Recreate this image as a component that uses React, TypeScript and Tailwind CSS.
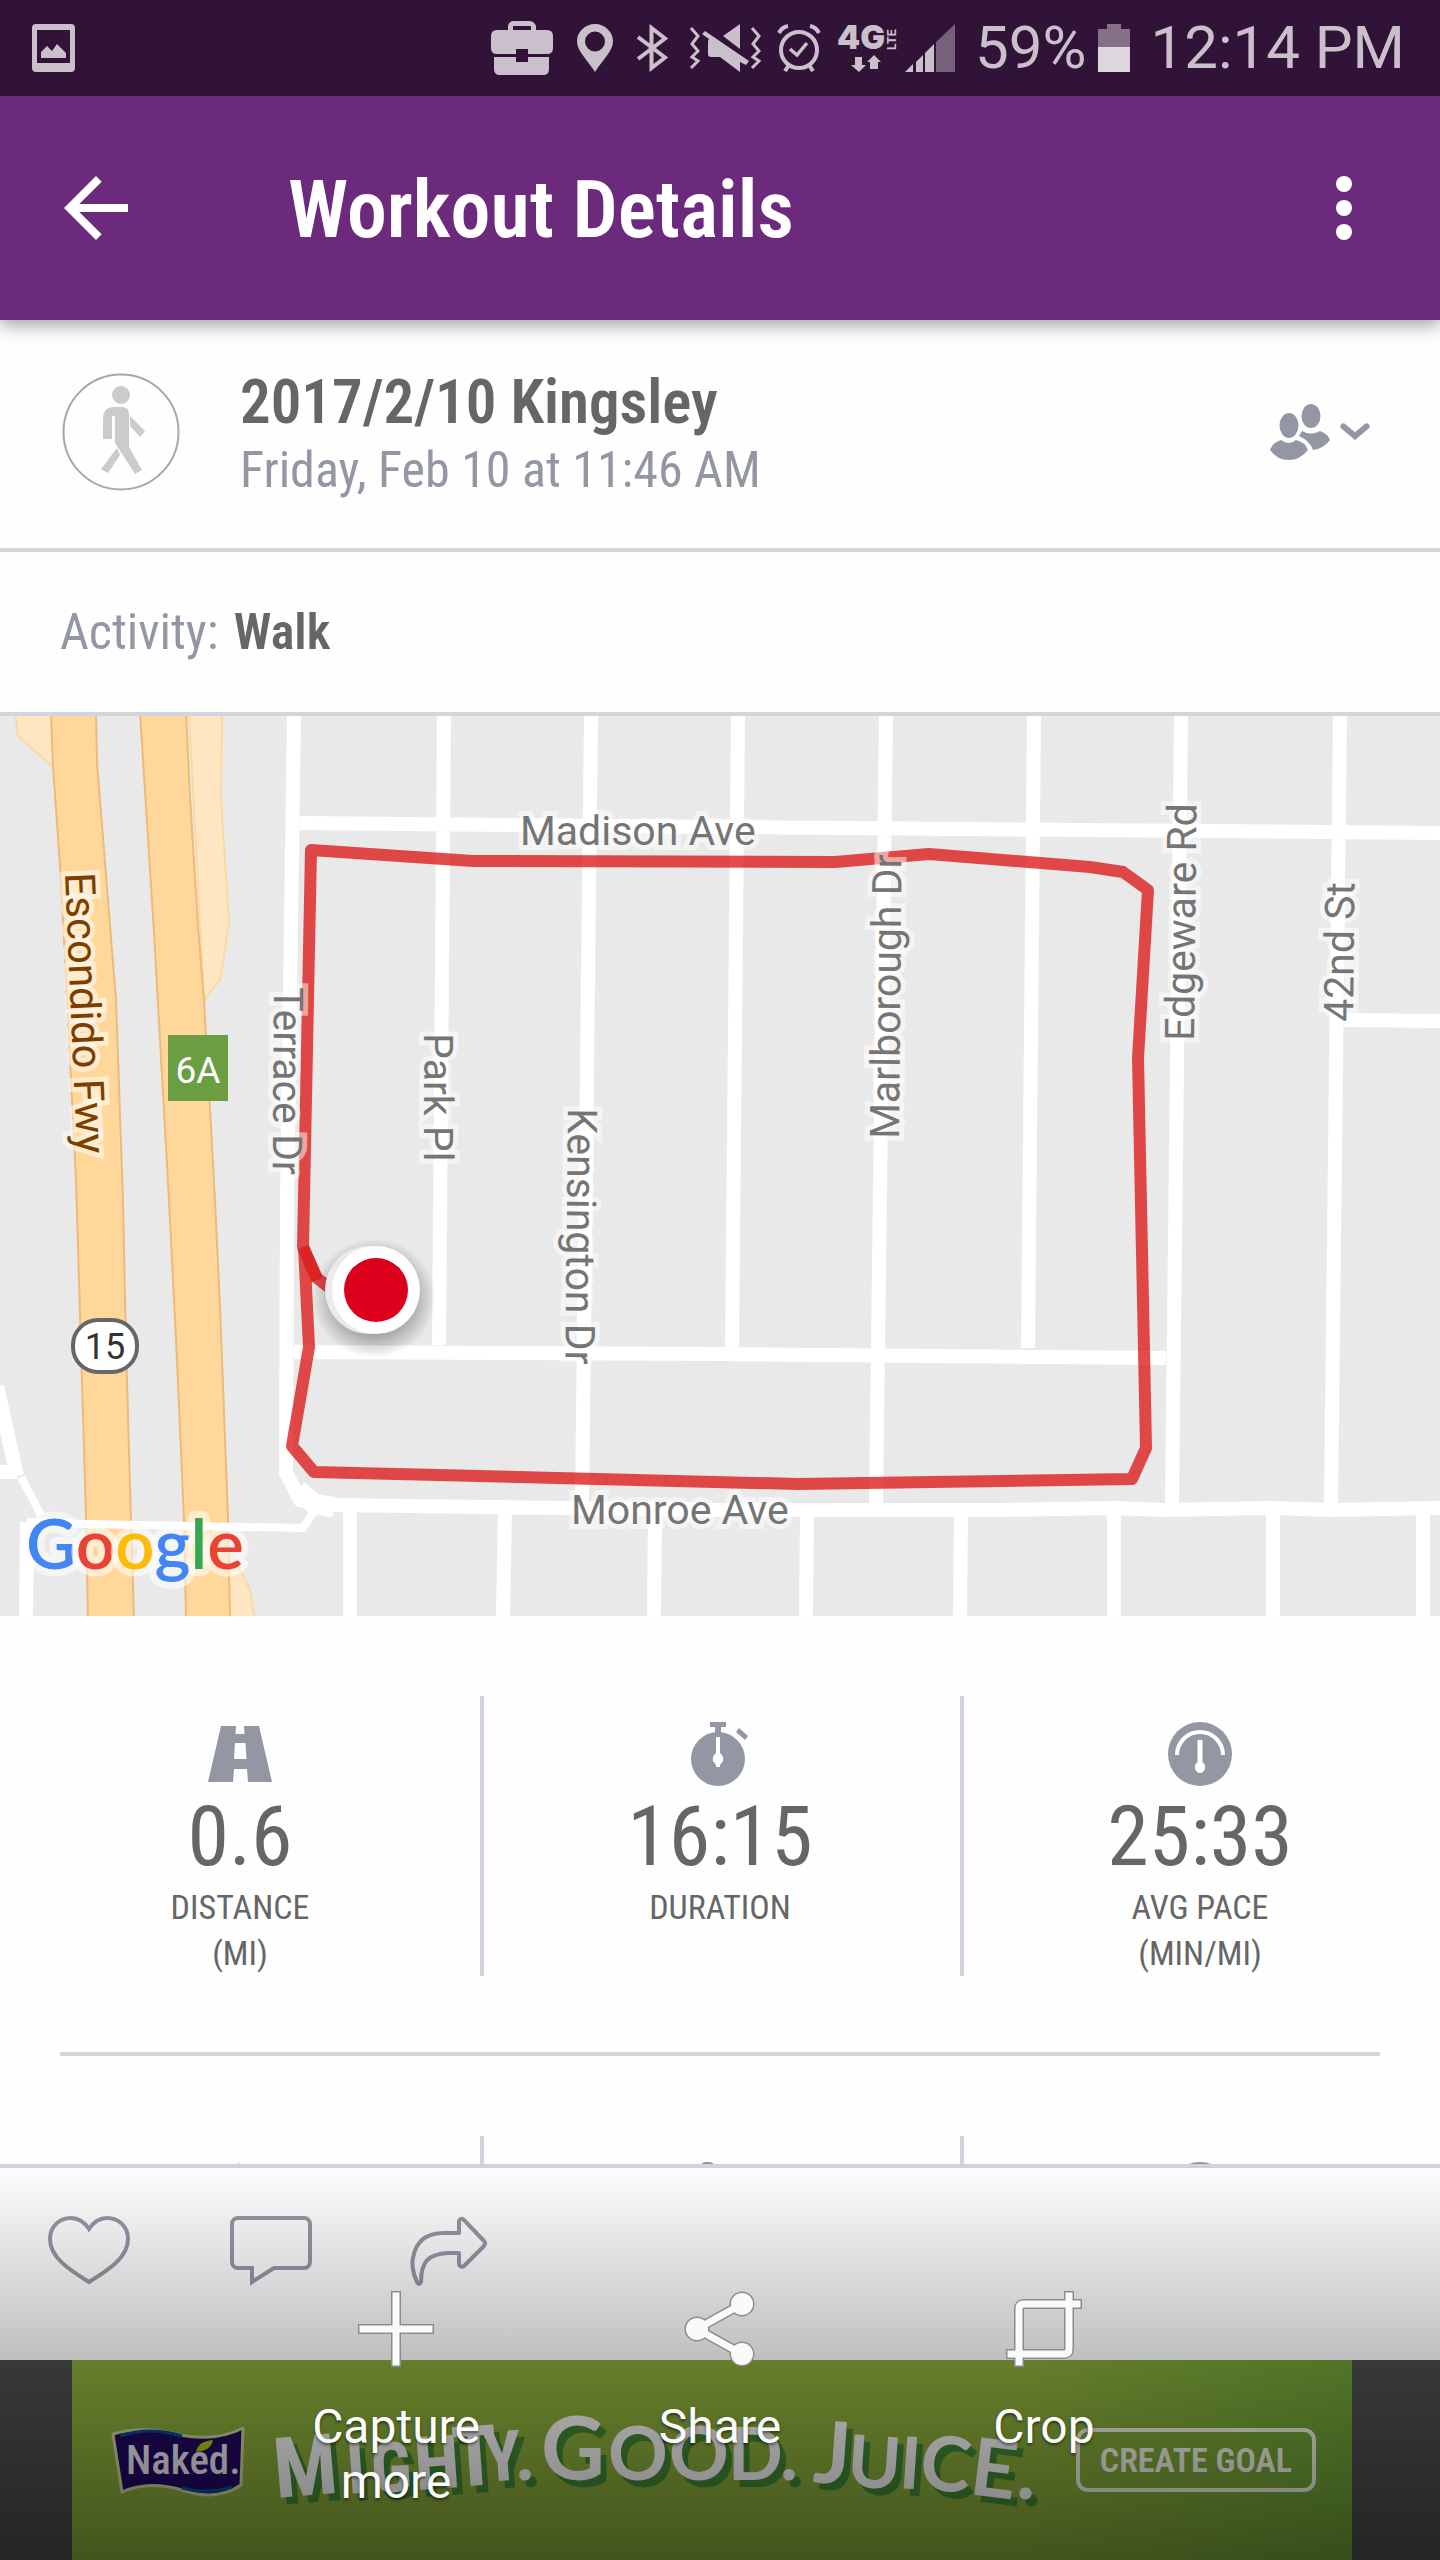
import type { ReactNode } from "react";

const condensed = "font-['Roboto_Condensed',Roboto,sans-serif]";

/* ---------- status bar ---------- */

function StatusBar() {
  return (
    <div className="flex h-24 shrink-0 items-center bg-[#311337] pr-[35px] pl-8 text-[60px] leading-none text-[#c9c0cb]">
      <svg className="h-12 w-[43px]" viewBox="0 0 43 48" fill="currentColor" aria-hidden="true">
        <path fillRule="evenodd" d="M4 0H39Q43 0 43 4V44Q43 48 39 48H4Q0 48 0 44V4Q0 0 4 0zM5 6V39H38V6z" />
        <path d="M9 34V28L15 22L20 27L25 20L34 29V34z" />
      </svg>
      <div className="ml-auto flex items-center">
        <svg className="h-[54px] w-[62px]" viewBox="0 0 62 54" fill="currentColor" aria-hidden="true">
          <path fillRule="evenodd" d="M17 9V5Q18 0 23 0H38Q43 0 45 5V9H56Q62 9 62 15V27Q62 33 56 33H37V28H25V33H6Q0 33 0 27V15Q0 9 6 9zM22 9H40V5H22z" />
          <path d="M3 36H25V41H37V36H58V48Q58 54 52 54H9Q3 54 3 48z" />
        </svg>
        <svg className="ml-6 h-12 w-9" viewBox="0 0 36 48" fill="currentColor" aria-hidden="true">
          <path fillRule="evenodd" d="M18 0C8 0 0 8 0 17C0 27 9 34 18 48C27 34 36 27 36 17C36 8 28 0 18 0zM18 7.500a10 10 0 1 1 0 20a10 10 0 0 1 0-20z" />
        </svg>
        <svg className="ml-6 h-12 w-8" viewBox="0 0 32 48" fill="none" stroke="currentColor" strokeWidth="4" aria-hidden="true">
          <path d="M1 13L28 33.500L14.500 44V4L28 14.500L1 35" />
        </svg>
        <svg className="ml-5 h-12 w-[72px]" viewBox="0 0 72 48" fill="currentColor" aria-hidden="true">
          <path d="M2 4L9 12L3 20L9 27L3 33L9 37L2 44M63 4L70 12L64 20L70 27L64 33L70 37L63 44" fill="none" stroke="currentColor" strokeWidth="3" />
          <path d="M16 7L60 37L57 41L51 38V48L31 33H22Q19 33 19 30V17L20 15L13 10z" />
          <path d="M51 0V25L34 12z" />
        </svg>
        <svg className="ml-4 h-12 w-11" viewBox="0 0 44 48" fill="none" stroke="currentColor" strokeWidth="4" aria-hidden="true">
          <circle cx="22" cy="26" r="18" />
          <path d="M13 25L20 31L30 19" strokeWidth="3.500" />
          <path d="M2 9Q5 3 11 2M42 9Q39 3 33 2M12 41L8 47M32 41L36 47" />
        </svg>
        <svg className="ml-4 h-12 w-[60px] overflow-visible" viewBox="0 0 60 48" fill="currentColor" role="img" aria-label="4G LTE">
          <text x="0" y="25" fontFamily="Inter, sans-serif" fontWeight="900" fontSize="33">4G</text>
          <text transform="translate(59 26) rotate(-90)" fontFamily="Inter, sans-serif" fontWeight="700" fontSize="12">LTE</text>
          <path d="M18 33H25V41H29L22 48L14 41H18zM33 45V38H30L37 31L44 38H41V45z" />
        </svg>
        <svg className="ml-2 h-12 w-[50px]" viewBox="0 0 50 48" fill="currentColor" aria-hidden="true">
          <path d="M0 48L8 40V48zM11 38L18 31V48H11zM20 29L29 20V48H20z" />
          <path d="M31 18L50 0V48H31z" opacity=".45" />
        </svg>
        <span className="ml-5">59%</span>
        <svg className="ml-3 h-12 w-8" viewBox="0 0 32 48" aria-hidden="true">
          <path d="M9 0H23V5H32V23H0V5H9z" fill="#856f89" />
          <path d="M0 23H32V48H0z" fill="#ddd6df" />
        </svg>
        <span className="ml-5">12:14 PM</span>
      </div>
    </div>
  );
}

/* ---------- app bar and header ---------- */

function AppBar() {
  return (
    <header className="relative z-10 flex h-56 shrink-0 items-center bg-[#6b2a7b] px-12 text-white shadow-[0_6px_16px_rgba(0,0,0,0.35)]">
      <button aria-label="Back" className="size-24">
        <svg viewBox="0 0 24 24" className="size-24" fill="currentColor">
          <path d="M20 11H7.830l5.590-5.590L12 4l-8 8 8 8 1.410-1.410L7.830 13H20v-2z" />
        </svg>
      </button>
      <h1 className={`ml-36 flex-1 pt-1 text-[80px] leading-none font-semibold ${condensed}`}>Workout Details</h1>
      <button aria-label="More options" className="size-24">
        <svg viewBox="0 0 24 24" className="size-24" fill="currentColor">
          <circle cx="12" cy="6" r="2" />
          <circle cx="12" cy="12" r="2" />
          <circle cx="12" cy="18" r="2" />
        </svg>
      </button>
    </header>
  );
}

function WorkoutHeader() {
  return (
    <section className={`flex items-center border-b-4 border-[#d2d5dc] pt-10 pr-[70px] pb-11 pl-[62px] ${condensed}`}>
      <svg className="size-[118px] shrink-0" viewBox="0 0 118 118" aria-hidden="true">
        <circle cx="59" cy="59" r="57.500" fill="none" stroke="#a3a7b1" strokeWidth="2" />
        <g fill="#cbcbcb">
          <circle cx="59" cy="22" r="9" />
          <path d="M41 66V46Q41 34 52 34H60Q67 34 67 41V74L80 97L73 101L53 70V43H50V66z" />
          <path d="M55 75L58 82L46 100L39 96z" />
          <path d="M68 43L83 58L78 64L68 53z" />
        </g>
      </svg>
      <div className="ml-[60px] flex-1 pt-2 leading-[68px]">
        <h2 className="text-[61px] font-semibold text-[#666]">2017/2/10 Kingsley</h2>
        <p className="text-[50px] text-[#9297a3]">Friday, Feb 10 at 11:46 AM</p>
      </div>
      <button aria-label="Sharing" className="flex items-center gap-2 text-[#9297a3]">
        <svg className="h-14 w-[62px]" viewBox="0 0 62 56" fill="currentColor">
          <ellipse cx="19" cy="21.500" rx="9.500" ry="12.500" />
          <ellipse cx="41" cy="12" rx="9.500" ry="12" />
          <path d="M0 46Q3 38 11 36Q19 42 26 36Q35 38 38 46Q30 56 19 56Q7 56 0 46z" />
          <path d="M32 27Q41 32 50 27Q58 30 60 36Q53 45 43 46Q40 37 29 32z" />
        </svg>
        <svg className="h-[18px] w-[30px]" viewBox="0 0 30 18" fill="none" stroke="currentColor" strokeWidth="6" strokeLinecap="round">
          <path d="M3.500 3.500L15 13L26.500 3.500" />
        </svg>
      </button>
    </section>
  );
}

/* ---------- route map ---------- */

const mainRoads =
  "M294 0L287 484L286 757L300 784L326 790M444 0L439 629M591 0L582 787M738 0L732 631M886 0L876 787M1034 0L1028 632M1181 0L1172 787M1340 0L1331 787M300 107L720 111L1440 117M1344 304L1440 305M294 636L720 638L1166 642M326 789L720 794L1000 794L1115 792L1161 794L1273 792L1331 794L1440 792M350 789V900M505 792L503 900M655 794L654 900M807 794L806 900M961 794L960 900M1114 792V900M1273 792V900M1423 792V900M27 806L26 900M-3 670L17 760M0 756H17";

const streets = [
  { name: "Madison Ave", at: "translate(520 129)" },
  { name: "Monroe Ave", at: "translate(571 808)" },
  { name: "Terrace Dr", at: "translate(274 271) rotate(90.400)" },
  { name: "Park Pl", at: "translate(424 317) rotate(90)" },
  { name: "Kensington Dr", at: "translate(568 392) rotate(90.600)" },
  { name: "Marlborough Dr", at: "translate(899 423) rotate(-89.500)" },
  { name: "Edgeware Rd", at: "translate(1194 325) rotate(-89.400)" },
  { name: "42nd St", at: "translate(1353 306) rotate(-89.400)" },
];

function RouteMap() {
  return (
    <svg className="block w-full shrink-0" viewBox="0 0 1440 900" role="img" aria-label="Route map" fontFamily="Roboto, sans-serif">
      <rect width="1440" height="900" fill="#e9e9e9" />
      <g fill="#ffe6c3" stroke="#fbd9a3" strokeWidth="2">
        <path d="M15 -4L18 20L53 51V-4z" />
        <path d="M189 -4H222L221 84L229 207L220 264L204 284z" />
        <path d="M228 830L250 874L255 904H228z" />
      </g>
      <g fill="#ffd79b" stroke="#edba7a" strokeWidth="2">
        <path d="M51 -4L53 51L61 164L76 464L81 631L86 801L88 904H134L131 804L126 631L123 484L116 284L97 47L96 -4z" />
        <path d="M140 -4L154 217L169 484L177 644L184 804L186 904H230L228 801L220 591L215 484L204 284L198 211L190 81L186 -4z" />
      </g>
      <path d="M27 806L87 808L303 812L316 792M21 761L41 799" fill="none" stroke="#fff" strokeWidth="8" />
      <path d={mainRoads} fill="none" stroke="#fff" strokeWidth="14" strokeLinejoin="round" />
      <path d="M298 774L314 788L334 791" fill="none" stroke="#fff" strokeWidth="20" strokeLinejoin="round" />

      <g fill="none" stroke="#dd1919" strokeOpacity=".78" strokeWidth="12" strokeLinejoin="round">
        <path d="M376 590L340 580L317 562L303 531L311 134L473 145L835 146L929 138L1090 151L1123 156L1148 174L1138 342L1146 732L1132 763L798 768L314 756L292 730L309 631L304 531" />
        <path d="M303 531L317 564" />
      </g>

      <g fontSize="41" fill="#757575" stroke="#fff" strokeOpacity=".5" strokeWidth="10" paintOrder="stroke">
        {streets.map((s) => (
          <text key={s.name} transform={s.at}>
            {s.name}
          </text>
        ))}
        <text transform="translate(65 157) rotate(87.600)" fill="#7c3f00" fontSize="42">
          Escondido Fwy
        </text>
      </g>

      <rect x="168" y="319" width="60" height="66" fill="#6b9e43" />
      <text x="198" y="367" fontSize="37" fill="#fff" textAnchor="middle">6A</text>
      <rect x="73" y="604" width="64" height="52" rx="25" fill="#fff" stroke="#666" strokeWidth="4" />
      <text x="105" y="643" fontSize="36" fill="#333" textAnchor="middle">15</text>

      <defs>
        <radialGradient id="marker-shadow">
          <stop offset="0.600" stopColor="#000" stopOpacity=".3" />
          <stop offset="1" stopColor="#000" stopOpacity="0" />
        </radialGradient>
      </defs>
      <ellipse cx="374" cy="582" rx="62" ry="60" fill="url(#marker-shadow)" />
      <circle cx="369" cy="574" r="44" fill="#ebebeb" />
      <circle cx="376" cy="574" r="44" fill="#fff" />
      <circle cx="376" cy="574" r="32" fill="#dc001c" />

      <text x="26" y="853" fontFamily="Lato, Roboto, sans-serif" fontSize="69" fontWeight="600" stroke="#fff" strokeOpacity=".55" strokeWidth="14" strokeLinejoin="round" paintOrder="stroke">
        <tspan fill="#4285f4">G</tspan>
        <tspan fill="#ea4335">o</tspan>
        <tspan fill="#fbbc05">o</tspan>
        <tspan fill="#4285f4">g</tspan>
        <tspan fill="#34a853">l</tspan>
        <tspan fill="#ea4335">e</tspan>
      </text>
    </svg>
  );
}

/* ---------- stats ---------- */

function StatIcon({ width, children }: { width: number; children: ReactNode }) {
  return (
    <svg className="h-16 shrink-0" viewBox={`0 0 ${width} 64`} fill="#9297a3" aria-hidden="true">
      {children}
    </svg>
  );
}

const roadIcon = (
  <StatIcon width={64}>
    <path fillRule="evenodd" d="M13 4H28L27.500 12H36.500L36 4H51L64 60H40L39 47H26L25 60H0zM27 21L26 37H38.500L37.500 21z" />
  </StatIcon>
);
const watchIcon = (
  <StatIcon width={58}>
    <circle cx="27" cy="37" r="27" />
    <path d="M19 0H35V5H30V12H24V5H19zM48 6L57 14L54 18L45 10z" />
    <path d="M25 15H29V31Q33 34 32 39L29 43V45H25V43L22 39Q21 34 25 31z" fill="#fff" />
  </StatIcon>
);
const gaugeIcon = (
  <StatIcon width={64}>
    <circle cx="32" cy="32" r="32" />
    <path d="M9 33A23 23 0 0 1 55 33" fill="none" stroke="#fff" strokeWidth="4" />
    <path d="M29.500 18H34.500V40Q38 43 37 47Q35 51 32 51Q29 51 27 47Q26 43 29.500 40z" fill="#fff" />
  </StatIcon>
);

const stats = [
  { icon: roadIcon, value: "0.6", label: "DISTANCE", unit: "(MI)" },
  { icon: watchIcon, value: "16:15", label: "DURATION", unit: "" },
  { icon: gaugeIcon, value: "25:33", label: "AVG PACE", unit: "(MIN/MI)" },
];

const nextIcons = [
  <StatIcon key="flame" width={48}>
    <path d="M22 0C28 12 42 22 42 40A18 18 0 0 1 6 42C6 28 22 20 22 0z" />
  </StatIcon>,
  <StatIcon key="shoe" width={60}>
    <path d="M8 6Q16 -6 26 4L32 24L50 40V60H12V20z" />
  </StatIcon>,
  <StatIcon key="speed" width={64}>
    <circle cx="32" cy="32" r="32" />
  </StatIcon>,
];

const column = "flex flex-col items-center border-l-4 border-[#d2d3dc] pt-[26px] pr-1 first:border-l-0 first:pr-0";

function Stats() {
  return (
    <section className={`pt-20 text-[#666] ${condensed}`}>
      <dl className="grid grid-cols-3">
        {stats.map((s) => (
          <div key={s.label} className={column}>
            {s.icon}
            <dd className="mt-1 text-[84px] leading-[94px]">{s.value}</dd>
            <dt className="text-center text-[34px] leading-[46px]">
              {s.label}
              <br />
              {s.unit}
            </dt>
          </div>
        ))}
      </dl>
      <hr className="mx-[60px] mt-[76px] mb-20 border-t-4 border-[#d2d5dc]" />
      <div className="grid h-[280px] grid-cols-3">
        {nextIcons.map((icon) => (
          <div key={icon.key} className={column}>
            {icon}
          </div>
        ))}
      </div>
    </section>
  );
}

/* ---------- bottom bar ---------- */

function SocialBar() {
  return (
    <div className="flex h-[196px] shrink-0 items-start border-t-4 border-[#d2d3dc] bg-white px-12 pt-12 text-[#9499a6]">
      <button aria-label="Like">
        <svg className="h-[70px] w-[82px]" viewBox="0 0 82 70" fill="none" stroke="currentColor" strokeWidth="4">
          <path d="M41 66C20 53 2 41 2 23C2 10 12 2 23 2C31 2 37 7 41 13C45 7 51 2 59 2C70 2 80 10 80 23C80 41 62 53 41 66z" />
        </svg>
      </button>
      <button aria-label="Comment" className="ml-[100px]">
        <svg className="h-[70px] w-[82px]" viewBox="0 0 82 70" fill="none" stroke="currentColor" strokeWidth="4">
          <path d="M8 2H74a6 6 0 0 1 6 6V46a6 6 0 0 1-6 6H44L22 66V52H8a6 6 0 0 1-6-6V8a6 6 0 0 1 6-6z" />
        </svg>
      </button>
      <button aria-label="Share workout" className="ml-[98px]">
        <svg className="h-[70px] w-[78px]" viewBox="0 0 78 70" fill="none" stroke="currentColor" strokeWidth="4" strokeLinejoin="round">
          <path d="M49 17V5Q51 1 54 4L74 25Q76 27 74 30L54 50Q50 52 49 48V37H38C18 38 11 46 11 66Q9 70 7 66C2 56 2 46 3 42C6 24 18 17 34 17z" />
        </svg>
      </button>
    </div>
  );
}

const slogan = [
  { c: "M", x: 8, y: 98, s: 84, r: -5, narrow: true },
  { c: "I", x: 79, y: 94, s: 72, r: -4 },
  { c: "G", x: 104, y: 93, s: 70, r: -3, narrow: true },
  { c: "H", x: 148, y: 90, s: 74, r: -4, narrow: true },
  { c: "T", x: 186, y: 87, s: 84, r: -4, narrow: true },
  { c: "Y", x: 217, y: 82, s: 70, r: -4, narrow: true },
  { c: ".", x: 248, y: 80, s: 76, r: 0 },
  { c: "G", x: 273, y: 80, s: 88, r: 0 },
  { c: "O", x: 340, y: 80, s: 74, r: 0 },
  { c: "O", x: 401, y: 80, s: 74, r: 0 },
  { c: "D", x: 460, y: 80, s: 72, r: 0 },
  { c: ".", x: 512, y: 80, s: 76, r: 0 },
  { c: "J", x: 544, y: 82, s: 86, r: 4 },
  { c: "U", x: 578, y: 86, s: 72, r: 4 },
  { c: "I", x: 630, y: 88, s: 72, r: 4 },
  { c: "C", x: 650, y: 88, s: 76, r: 6 },
  { c: "E", x: 700, y: 94, s: 80, r: 7 },
  { c: ".", x: 748, y: 99, s: 80, r: 0 },
];

const sloganLayers = [
  { id: "shade", shift: "translate(6 7)", fill: "#3f8433" },
  { id: "face", shift: "translate(0 0)", fill: "#f2f2f2" },
];

function AdBanner() {
  return (
    <aside aria-label="Advertisement" className="flex h-[200px] shrink-0 justify-center bg-[#484c49] pr-[88px] pl-[72px]">
      <div className="flex flex-1 items-center bg-linear-to-r from-[#87a839] from-75% to-[#6b9c36] px-9">
        <svg className="h-[76px] w-[140px] shrink-0 overflow-visible" viewBox="0 0 140 76" role="img" aria-label="Naked">
          <path d="M5 12Q36 3 72 13Q108 20 135 6L133 63Q108 80 74 68Q40 58 14 70z" fill="#20095f" stroke="#c6cf9d" strokeWidth="3" strokeLinejoin="round" />
          <path d="M12 14Q42 4 74 14M74 66Q100 73 124 65" fill="none" stroke="#0a4a92" strokeWidth="3" />
          <text x="18" y="52" fontFamily="'Roboto Condensed', sans-serif" fontWeight="500" fontSize="41" fill="#e8e4f0">Naked.</text>
          <path d="M88 30Q90 19 105 18Q103 29 88 30z" fill="#a5ca10" />
        </svg>
        <svg className="ml-5 h-[120px] w-[770px] shrink-0 overflow-visible" viewBox="0 0 770 120" role="img" aria-label="Mighty. Good. Juice." fontWeight="700">
          {sloganLayers.map((layer) => (
            <g key={layer.id} fill={layer.fill} transform={layer.shift}>
              {slogan.map((l) => (
                <text
                  key={l.x}
                  fontSize={l.s}
                  fontFamily={l.narrow ? "'Roboto Condensed', sans-serif" : "Lato, sans-serif"}
                  transform={`translate(${l.x} ${l.y}) rotate(${l.r})`}
                >
                  {l.c}
                </text>
              ))}
            </g>
          ))}
        </svg>
        <button className={`ml-auto rounded-xl border-4 border-[#e8ecd8] px-5 py-2 text-[34px] leading-[40px] font-semibold whitespace-nowrap text-[#eef0e4] ${condensed}`}>
          CREATE GOAL
        </button>
      </div>
    </aside>
  );
}

/* ---------- capture overlay ---------- */

function CaptureAction({ label, children }: { label: ReactNode; children: ReactNode }) {
  return (
    <button className="flex w-[324px] flex-col items-center gap-8">
      <svg className="size-[76px]" viewBox="0 0 76 76" fill="none">
        {children}
      </svg>
      <span className="text-[48px] leading-[55px] [text-shadow:0_2px_3px_rgba(0,0,0,0.5)]">{label}</span>
    </button>
  );
}

function Outlined({ d }: { d: string }) {
  return (
    <>
      <path d={d} stroke="#8c8c8c" strokeWidth="10" strokeLinecap="square" />
      <path d={d} stroke="#fafafa" strokeWidth="7" strokeLinecap="square" />
    </>
  );
}

function CaptureOverlay() {
  const nodes = [
    [15, 38],
    [60, 13],
    [60, 63],
  ];
  return (
    <div className="absolute inset-x-0 bottom-0 z-20 flex h-[400px] items-start justify-center bg-linear-to-b from-black/0 to-black/50 pt-[131px] text-[#fafafa]">
      <CaptureAction label={<>Capture<br />more</>}>
        <Outlined d="M38 5V71M5 38H71" />
      </CaptureAction>
      <CaptureAction label="Share">
        <g fill="#8c8c8c">
          {nodes.map(([x, y]) => (
            <circle key={y} cx={x} cy={y} r="12.500" />
          ))}
        </g>
        <Outlined d="M60 13L15 38L60 63" />
        <g fill="#fafafa">
          {nodes.map(([x, y]) => (
            <circle key={y} cx={x} cy={y} r="11" />
          ))}
        </g>
      </CaptureAction>
      <CaptureAction label="Crop">
        <Outlined d="M13 71V18Q13 13 18 13H71M5 63H58Q63 63 63 58V5" />
      </CaptureAction>
    </div>
  );
}

export default function App() {
  return (
    <div className="relative flex h-screen flex-col overflow-hidden bg-[#fefefe] font-[Roboto,sans-serif]">
      <StatusBar />
      <AppBar />
      <main className="min-h-0 flex-1 overflow-hidden">
        <WorkoutHeader />
        <p className={`border-b-4 border-[#d2d5dc] px-[60px] py-[46px] text-[50px] leading-[68px] text-[#9297a3] ${condensed}`}>
          Activity: <span className="ml-1 font-semibold text-[#666]">Walk</span>
        </p>
        <RouteMap />
        <Stats />
      </main>
      <SocialBar />
      <AdBanner />
      <CaptureOverlay />
    </div>
  );
}
